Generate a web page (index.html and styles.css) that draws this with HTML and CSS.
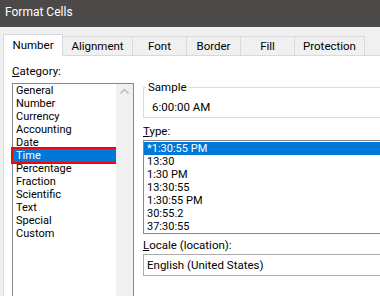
FILE: index.html
```html
<!DOCTYPE html>
<html lang="en">
  <head>
    <meta charset="UTF-8" />
    <title>Format Cells</title>
    <link rel="stylesheet" href="styles.css">
  </head>
  <body>
    <div class="titlebar">Format Cells</div>

    <div class="dialog">
      <div class="tabs">
        <div class="tab selected">Number</div>
        <div class="tab wide">Alignment</div>
        <div class="tab">Font</div>
        <div class="tab">Border</div>
        <div class="tab">Fill</div>
        <div class="tab wide">Protection</div>
      </div>

      <div class="panel">
        <div class="category">
          <div class="label"><u>C</u>ategory:</div>
          <div class="listbox">
            <ul class="items">
              <li>General</li>
              <li>Number</li>
              <li>Currency</li>
              <li>Accounting</li>
              <li>Date</li>
              <li class="active marked">Time</li>
              <li>Percentage</li>
              <li>Fraction</li>
              <li>Scientific</li>
              <li>Text</li>
              <li>Special</li>
              <li>Custom</li>
            </ul>
            <div class="scrollbar">
              <svg width="9" height="5" viewBox="0 0 9 5">
                <polyline points="0.5,4.5 4.5,0.5 8.5,4.5" fill="none" stroke="#b4b4b4" stroke-width="1.2" />
              </svg>
            </div>
          </div>
        </div>

        <div class="details">
          <fieldset class="sample">
            <legend>Sample</legend>
            <div class="sample-value">6:00:00 AM</div>
          </fieldset>

          <div class="label type-label"><u>T</u>ype:</div>
          <ul class="types">
            <li class="active">*1:30:55 PM</li>
            <li>13:30</li>
            <li>1:30 PM</li>
            <li>13:30:55</li>
            <li>1:30:55 PM</li>
            <li>30:55.2</li>
            <li>37:30:55</li>
          </ul>

          <div class="label locale-label"><u>L</u>ocale (location):</div>
          <div class="combo">English (United States)</div>
        </div>
      </div>
    </div>
  </body>
</html>
```

FILE: styles.css
```css
* {
  margin: 0;
  padding: 0;
  box-sizing: border-box;
}

body {
  width: 380px;
  height: 296px;
  overflow: hidden;
  font-family: Roboto, "Noto Sans", sans-serif;
  font-size: 11.5px;
  color: #000;
  background: #f0f0f0;
}

ul {
  list-style: none;
}

.titlebar {
  height: 27px;
  line-height: 25px;
  padding-left: 5px;
  background: #4b4a48;
  color: #fff;
  font-size: 12px;
}

.dialog {
  padding: 7px 0 0 3px;
}

/* tabs */
.tabs {
  display: flex;
  align-items: flex-end;
  height: 21px;
}

.tab {
  width: 54px;
  height: 19px;
  line-height: 18px;
  text-align: center;
  background: #f0f0f0;
  border-top: 1px solid #d9d9d9;
  border-right: 1px solid #d9d9d9;
}

.tab.wide {
  width: 70px;
}

.tab.selected {
  position: relative;
  z-index: 1;
  width: 60px;
  height: 22px;
  line-height: 21px;
  margin-bottom: -1px;
  background: #fff;
  border-left: 1px solid #d9d9d9;
}

.panel {
  display: flex;
  gap: 9px;
  width: 420px;
  height: 260px;
  padding: 7px 0 0 8px;
  background: #fff;
  border-top: 1px solid #d9d9d9;
  border-left: 1px solid #d9d9d9;
}

.label {
  height: 15px;
  line-height: 15px;
}

/* category list */
.category {
  width: 122px;
}

.category .label {
  margin: 1px 0 4px;
}

.listbox {
  display: flex;
  height: 240px;
  border: 1px solid #828790;
}

.items {
  flex: 1;
}

.items li,
.types li {
  height: 13px;
  line-height: 13px;
  padding-left: 3px;
  font-size: 11px;
  white-space: nowrap;
}

.active {
  background: #0078d7;
  color: #fff;
}

.marked {
  outline: 2px solid #f00;
}

.scrollbar {
  width: 17px;
  padding: 5px 0 0 4px;
  background: #f0f0f0;
}

.scrollbar svg {
  display: block;
}

/* right side */
.details {
  width: 260px;
}

.sample {
  margin-top: 17px;
  padding: 5px 8px 2px;
  border: 1px solid #dcdcdc;
}

.sample legend {
  margin-left: -6px;
  padding: 0 2px;
  line-height: 15px;
}

.sample-value {
  height: 15px;
  line-height: 15px;
}

.type-label {
  margin: 6px 0 1px;
}

.types {
  padding-top: 1px;
  border: 1px solid #828790;
}

.locale-label {
  margin: 4px 0 1px;
}

.combo {
  height: 22px;
  line-height: 20px;
  padding-left: 3px;
  border: 1px solid #adadad;
}
```
